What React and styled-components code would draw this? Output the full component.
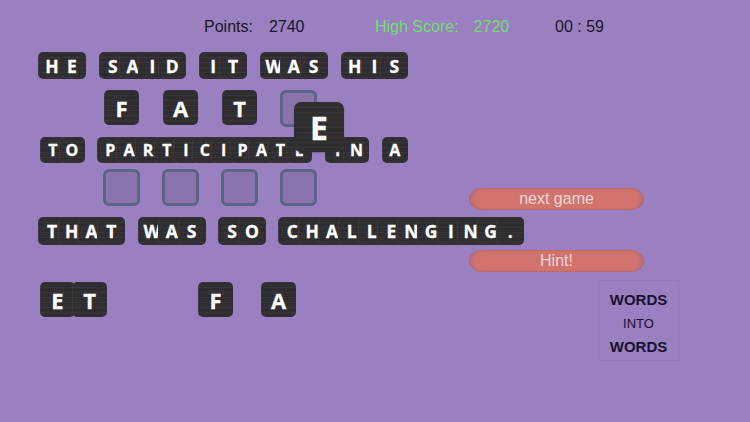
import React from "react";
import styled, { createGlobalStyle } from "styled-components";

const Global = createGlobalStyle`
  html, body { margin: 0; padding: 0; background: #9a7fc1; }
  body { width: 750px; height: 422px; overflow: hidden; font-family: "Liberation Sans", Arial, sans-serif; }
`;

const Stage = styled.div`
  width: 750px;
  height: 422px;
  display: grid;
  background: #9a7fc1;
  overflow: hidden;
`;

const Board = styled.main`
  grid-area: 1 / 1;
  display: flex;
  flex-direction: column;
`;

const Side = styled.aside`
  grid-area: 1 / 1;
  display: flex;
  flex-direction: column;
  align-items: flex-start;
  padding: 188px 0 0 469px;
`;

const Header = styled.header`
  height: 52px;
  box-sizing: border-box;
  padding: 17px 0 0 204px;
  display: flex;
  font-size: 16px;
  line-height: 20px;
`;

const Stat = styled.div`
  display: flex;
  width: ${(p) => p.$width}px;
  color: ${(p) => p.$color || "#1b1626"};
  white-space: pre;
`;

const Value = styled.span`
  margin-left: ${(p) => p.$gap}px;
`;

const Row = styled.div`
  display: flex;
  align-items: flex-start;
  height: ${(p) => p.$height}px;
  margin-bottom: ${(p) => p.$after}px;
  padding-left: ${(p) => p.$left}px;
`;

const Word = styled.div`
  display: flex;
  margin-right: ${(p) => p.$gap}px;
`;

const Tile = styled.div`
  flex: none;
  box-sizing: border-box;
  width: ${(p) => p.$size}px;
  height: ${(p) => p.$height || p.$size}px;
  margin-left: ${(p) => p.$overlap || 0}px;
  border-radius: 5px;
  display: flex;
  align-items: center;
  justify-content: center;
  color: #fff;
  font-family: "Open Sans", "DejaVu Sans", sans-serif;
  font-weight: 700;
  font-size: ${(p) => p.$font}px;
  -webkit-text-stroke: 0.3px #fff;
  box-shadow: inset 1px 0 0 rgba(255, 255, 255, 0.05);
  background-color: #312e31;
  background-image:
    repeating-linear-gradient(180deg, rgba(255,255,255,0.03) 0 1px, transparent 1px 5px),
    repeating-linear-gradient(180deg, rgba(0,0,0,0.07) 0 1px, transparent 1px 7px);
`;

const BigTile = styled(Tile)`
  margin-right: ${(p) => p.$gap}px;
`;

const Slot = styled.div`
  flex: none;
  box-sizing: border-box;
  width: 37px;
  height: 37px;
  margin-right: 22px;
  border: 3px solid #5a6485;
  border-radius: 6px;
  background: #8b74ae;
`;

const Dragged = styled(Tile)`
  position: absolute;
  left: 294px;
  top: 102px;
  border-radius: 7px;
  box-shadow: 0 1px 2px rgba(40, 30, 60, 0.3);
`;

const Pill = styled.button`
  width: 175px;
  height: 22px;
  padding: 0;
  border: 0;
  border-radius: 14px / 11px;
  margin-bottom: ${(p) => p.$after}px;
  background: linear-gradient(90deg, #b96f78 0, #d2746d 5%, #d2746d 95%, #b96f78 100%);
  box-shadow: inset 0 1px 2px rgba(160, 90, 100, 0.45), inset 0 -1px 2px rgba(160, 90, 100, 0.45);
  color: #f5d5da;
  font-family: "Liberation Sans", Arial, sans-serif;
  font-size: 16px;
  line-height: 20px;
`;

const Logo = styled.div`
  box-sizing: border-box;
  width: 81px;
  height: 81px;
  margin-left: 129px;
  padding-top: 6px;
  border: 1px solid #9279ba;
  display: flex;
  flex-direction: column;
  align-items: center;
  justify-content: center;
  gap: 4px;
  color: #1a1230;
`;

const LogoLine = styled.div`
  font-size: ${(p) => p.$size}px;
  font-weight: ${(p) => (p.$bold ? 700 : 400)};
  line-height: 19.5px;
`;

const LetterRun = ({ text, size, height, step, font, gap }) => (
  <Word $gap={gap}>
    {text.split("").map((c, i) => (
      <Tile key={i} $size={size} $height={height} $font={font} $overlap={i ? step - size : 0}>
        {c}
      </Tile>
    ))}
  </Word>
);

const Sentence = ({ words, ...rest }) =>
  words.map((w, i) => <LetterRun key={i} text={w} {...rest} />);

const top = { size: 28, height: 27, step: 19.8, font: 17.5, gap: 13 };
const middle = { size: 26, height: 26, step: 18.9, font: 16, gap: 12.3 };
const bottom = { size: 28, height: 28, step: 19.8, font: 17.5, gap: 12.5 };

export default function App() {
  return (
    <>
      <Global />
      <Stage>
        <Board>
          <Header>
            <Stat $width={171}>Points:<Value $gap={16}>2740</Value></Stat>
            <Stat $width={180} $color="#74de74">High Score:<Value $gap={15}>2720</Value></Stat>
            <Stat $width={60}>00 : 59</Stat>
          </Header>
          <Row $height={27} $after={11} $left={38}>
            <Sentence words={["HE", "SAID", "IT", "WAS", "HIS"]} {...top} />
          </Row>
          <Row $height={37} $after={10} $left={104}>
            <BigTile $size={35} $font={22} $gap={24}>F</BigTile>
            <BigTile $size={35} $font={22} $gap={24}>A</BigTile>
            <BigTile $size={35} $font={22} $gap={23}>T</BigTile>
            <Slot />
          </Row>
          <Row $height={26} $after={6} $left={40}>
            <Sentence words={["TO", "PARTICIPATE", "IN", "A"]} {...middle} />
          </Row>
          <Row $height={37} $after={11} $left={103}>
            <Slot /><Slot /><Slot /><Slot />
          </Row>
          <Row $height={28} $after={37} $left={38}>
            <Sentence words={["THAT", "WAS", "SO", "CHALLENGING."]} {...bottom} />
          </Row>
          <Row $height={35} $after={0} $left={40}>
            <BigTile $size={35} $font={22} $gap={0}>E</BigTile>
            <BigTile $size={35} $font={22} $gap={91} $overlap={-3}>T</BigTile>
            <BigTile $size={35} $font={22} $gap={28}>F</BigTile>
            <BigTile $size={35} $font={22} $gap={0}>A</BigTile>
          </Row>
        </Board>
        <Side>
          <Pill $after={40}>next game</Pill>
          <Pill $after={8}>Hint!</Pill>
          <Logo>
            <LogoLine $size={15} $bold>WORDS</LogoLine>
            <LogoLine $size={13}>INTO</LogoLine>
            <LogoLine $size={15} $bold>WORDS</LogoLine>
          </Logo>
        </Side>
        <Dragged $size={50} $font={32}>E</Dragged>
      </Stage>
    </>
  );
}
